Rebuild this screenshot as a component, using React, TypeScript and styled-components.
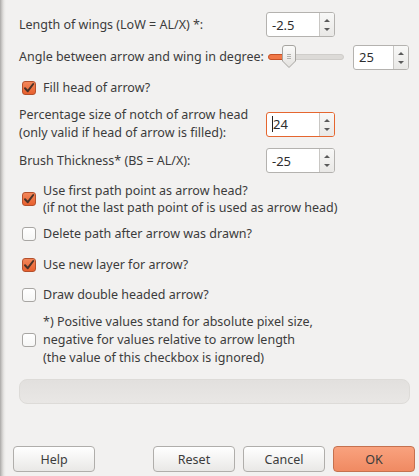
import React from "react";
import styled, { createGlobalStyle } from "styled-components";

const Global = createGlobalStyle`
  html, body { margin: 0; padding: 0; background: #f2f1f0; }
  body { font-family: "Noto Sans", "DejaVu Sans", sans-serif; }
`;

const Window = styled.div`
  position: relative;
  width: 419px;
  height: 476px;
  box-sizing: border-box;
  background: linear-gradient(to right, #a9a8a6 0px, #cfcdcb 2px, #e9e8e6 4px, #f2f1f0 6px);
  color: #3c3c3c;
  font-size: 12.5px;
  display: flex;
  flex-direction: column;
  padding: 12px 0 0 19px;
  overflow: hidden;
  & > * { flex-shrink: 0; }
`;

const Row = styled.div<{ $top: number; $h: number }>`
  display: flex;
  align-items: center;
  margin-top: ${(p) => p.$top}px;
  height: ${(p) => p.$h}px;
`;

const Label = styled.div<{ $w?: number; $lh?: number }>`
  width: ${(p) => (p.$w ? `${p.$w}px` : "auto")};
  flex: none;
  line-height: ${(p) => p.$lh ?? 18}px;
  white-space: nowrap;
`;

const SpinWrap = styled.div<{ $w: number; $focus?: boolean }>`
  display: flex;
  width: ${(p) => p.$w}px;
  height: 25px;
  box-sizing: border-box;
  border: 1px solid ${(p) => (p.$focus ? "#e5662f" : "#b4b2af")};
  border-radius: 3px;
  background: #fff;
  overflow: hidden;
  flex: none;
`;

const SpinEntry = styled.div`
  flex: 1;
  display: flex;
  align-items: center;
  padding-left: 5px;
  font-size: 13px;
  color: #2e2e2e;
`;

const Caret = styled.span`
  display: inline-block;
  width: 1px;
  height: 16px;
  background: #222;
`;

const SpinButtons = styled.div`
  width: 15px;
  border-left: 1px solid #c9c7c4;
  background: linear-gradient(#f8f8f7, #e9e8e6);
  display: flex;
  flex-direction: column;
  align-items: center;
  justify-content: space-between;
  padding: 6px 0 5px;
  box-sizing: border-box;
`;

const Tri = styled.div<{ $down?: boolean }>`
  width: 0;
  height: 0;
  border-left: 3px solid transparent;
  border-right: 3px solid transparent;
  ${(p) =>
    p.$down
      ? "border-top: 3px solid #5a5a5a;"
      : "border-bottom: 3px solid #5a5a5a;"}
`;

const Spin = ({ value, w, focus }: { value: string; w: number; focus?: boolean }) => (
  <SpinWrap $w={w} $focus={focus}>
    <SpinEntry>
      {focus && <Caret />}
      {value}
    </SpinEntry>
    <SpinButtons>
      <Tri />
      <Tri $down />
    </SpinButtons>
  </SpinWrap>
);

const SliderBox = styled.div`
  position: relative;
  width: 76px;
  height: 24px;
  margin-right: 9px;
  flex: none;
`;

const Trough = styled.div`
  position: absolute;
  left: 0;
  right: 0;
  top: 9px;
  height: 4px;
  border-radius: 3px;
  background: #dcdad7;
  border: 1px solid #cfcdca;
`;

const Fill = styled.div`
  position: absolute;
  left: 0;
  top: 9px;
  width: 17px;
  height: 4px;
  border-radius: 3px;
  background: #f07746;
  border: 1px solid #c65126;
`;

const Thumb = styled.svg`
  position: absolute;
  left: 14px;
  top: 0;
`;

const Slider = () => (
  <SliderBox>
    <Trough />
    <Fill />
    <Thumb width="14" height="24" viewBox="0 0 14 24">
      <defs>
        <linearGradient id="tg" x1="0" y1="0" x2="0" y2="1">
          <stop offset="0" stopColor="#fbfbfa" />
          <stop offset="1" stopColor="#e3e1de" />
        </linearGradient>
      </defs>
      <path
        d="M3 0.5 H11 Q13.5 0.5 13.5 3 V16 L7 22.5 L0.5 16 V3 Q0.5 0.5 3 0.5 Z"
        fill="url(#tg)"
        stroke="#a6a4a0"
      />
      <path d="M5 9.5 H9 M5 11.5 H9 M5 13.5 H9" stroke="#b3b1ad" strokeWidth="1" />
    </Thumb>
  </SliderBox>
);

const CheckBox = styled.div<{ $on?: boolean }>`
  width: 14px;
  height: 14px;
  flex: none;
  box-sizing: border-box;
  border-radius: 3px;
  border: 1px solid ${(p) => (p.$on ? "#b4502c" : "#a8a6a3")};
  background: ${(p) =>
    p.$on ? "linear-gradient(#f3875a, #e8602e)" : "linear-gradient(#ffffff, #f6f6f5)"};
  display: flex;
  align-items: center;
  justify-content: center;
  margin-left: 3px;
  margin-right: 7px;
`;

const Check = ({ on }: { on?: boolean }) => (
  <CheckBox $on={on}>
    {on && (
      <svg width="12" height="12" viewBox="0 0 12 12">
        <path
          d="M2 6.2 L4.8 9.2 L10.2 2"
          fill="none"
          stroke="#4b3328"
          strokeWidth="2"
          strokeLinecap="round"
          strokeLinejoin="round"
        />
      </svg>
    )}
  </CheckBox>
);

const ProgressBar = styled.div`
  width: 391px;
  height: 25px;
  box-sizing: border-box;
  margin-top: 12px;
  border-radius: 8px;
  border: 1px solid #dddbd8;
  background: linear-gradient(#e2e0de, #e9e7e5);
`;

const ButtonRow = styled.div`
  display: flex;
  margin-top: 42px;
  margin-left: -6px;
`;

const Button = styled.div<{ $primary?: boolean; $gap?: number }>`
  width: 82px;
  height: 26px;
  box-sizing: border-box;
  margin-left: ${(p) => p.$gap ?? 0}px;
  border-radius: 4px;
  border: 1px solid ${(p) => (p.$primary ? "#c5714f" : "#b0aeab")};
  background: ${(p) =>
    p.$primary
      ? "linear-gradient(#f9a27e, #f08a62)"
      : "linear-gradient(#ffffff, #e9e8e6)"};
  display: flex;
  align-items: center;
  justify-content: center;
  color: #3c3c3c;
  font-size: 12.5px;
`;

export default function App() {
  return (
    <>
      <Global />
      <Window>
        <Row $top={0} $h={25}>
          <Label $w={247}>Length of wings (LoW = AL/X) *:</Label>
          <Spin value="-2.5" w={69} />
        </Row>
        <Row $top={8} $h={24}>
          <Label $w={249}>Angle between arrow and wing in degree:</Label>
          <Slider />
          <Spin value="25" w={56} />
        </Row>
        <Row $top={11} $h={16}>
          <Check on />
          <Label>Fill head of arrow?</Label>
        </Row>
        <Row $top={10} $h={36}>
          <Label $w={247}>
            Percentage size of notch of arrow head
            <br />
            (only valid if head of arrow is filled):
          </Label>
          <Spin value="24" w={69} focus />
        </Row>
        <Row $top={6} $h={25}>
          <Label $w={247}>Brush Thickness* (BS = AL/X):</Label>
          <Spin value="-25" w={69} />
        </Row>
        <Row $top={8} $h={35}>
          <Check on />
          <Label $lh={17}>
            Use first path point as arrow head?
            <br />
            (if not the last path point of is used as arrow head)
          </Label>
        </Row>
        <Row $top={10} $h={16}>
          <Check />
          <Label>Delete path after arrow was drawn?</Label>
        </Row>
        <Row $top={15} $h={16}>
          <Check on />
          <Label>Use new layer for arrow?</Label>
        </Row>
        <Row $top={14} $h={16}>
          <Check />
          <Label>Draw double headed arrow?</Label>
        </Row>
        <Row $top={10} $h={54}>
          <Check />
          <Label>
            *) Positive values stand for absolute pixel size,
            <br />
            negative for values relative to arrow length
            <br />
            (the value of this checkbox is ignored)
          </Label>
        </Row>
        <ProgressBar />
        <ButtonRow>
          <Button>Help</Button>
          <Button $gap={58}>Reset</Button>
          <Button $gap={8}>Cancel</Button>
          <Button $gap={8} $primary>
            OK
          </Button>
        </ButtonRow>
      </Window>
    </>
  );
}
